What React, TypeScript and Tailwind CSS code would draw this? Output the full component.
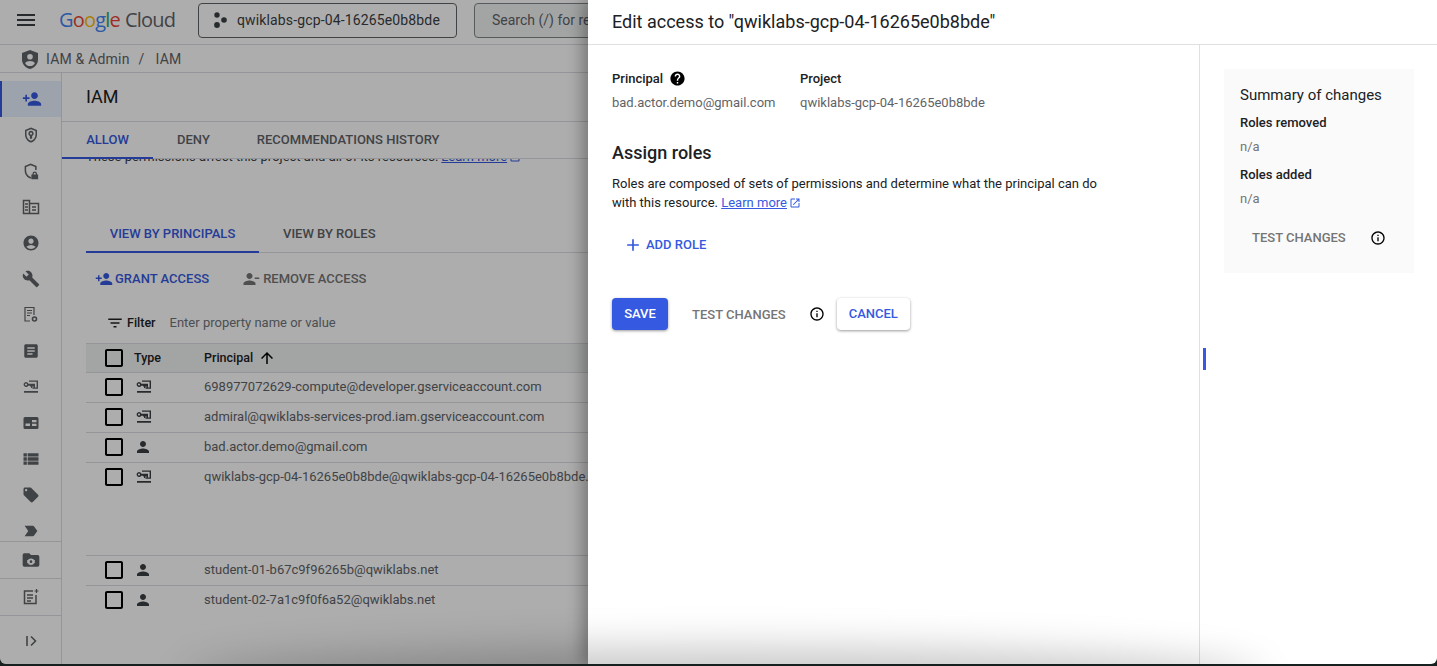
import React from 'react';
import {
  MdAccountCircle,
  MdAdd,
  MdArrowUpward,
  MdArticle,
  MdBuild,
  MdCheckBoxOutlineBlank,
  MdFilterList,
  MdHelp,
  MdInfoOutline,
  MdLabelImportant,
  MdLocalOffer,
  MdMenu,
  MdOpenInNew,
  MdPerson,
  MdPersonAdd,
  MdPersonRemove,
  MdViewList,
} from 'react-icons/md';

// Drawings the icon packages don't carry
const ServiceAccount = () => (
  <svg width={16} height={14} viewBox="0 0 16 14" fill="currentColor">
    <path fillRule="evenodd" d="M3 2a2.500 2.500 0 0 1 2.400 1.800H12V8h-1.400V6.500H9.400V8H8V6.500H7V5.800H5.300A2.500 2.500 0 1 1 3 2zm0 1.400a1.100 1.100 0 1 0 0 2.200 1.100 1.100 0 0 0 0-2.200z" />
    <path d="M6 .5h9v8.300H9.500V7.500h4.100V1.800H6zM1 11h14v1.700H1z" />
  </svg>
);

const KeyholeShield = () => (
  <svg width={18} height={18} viewBox="0 0 24 24" fill="currentColor">
    <path fillRule="evenodd" d="M12 2 4 5.200v6c0 5 3.400 9.600 8 10.800 4.600-1.200 8-5.800 8-10.800v-6zm0 2.200 6 2.400v4.600c0 3.900-2.500 7.500-6 8.600-3.500-1.100-6-4.700-6-8.600V6.600z" />
    <path fillRule="evenodd" d="M12 6.500a3.500 3.500 0 0 1 1.500 6.700V17h-3v-3.800A3.500 3.500 0 0 1 12 6.500zm0 2a1.500 1.500 0 1 0 0 3 1.500 1.500 0 0 0 0-3z" />
  </svg>
);

const LockShield = () => (
  <svg width={18} height={18} viewBox="0 0 24 24" fill="currentColor">
    <path d="M11.500 2 3.500 5.200v6c0 5 3.400 9.600 8 10.800l.8-.2v-2.200l-.8.300c-3.500-1.100-6-4.700-6-8.600V6.600l6-2.400 6 2.400v4h2V5.200z" />
    <path fillRule="evenodd" d="M14 16.500v-1a3 3 0 0 1 6 0v1h1.500V23h-9v-6.500zm1.700 0h2.600v-1a1.300 1.300 0 0 0-2.600 0z" />
  </svg>
);

const AdminShield = () => (
  <svg width={16} height={19} viewBox="0 0 16 19" fill="currentColor">
    <path fillRule="evenodd" d="M8 0 0 3v6.500C0 14 3.400 17.900 8 19c4.600-1.100 8-5 8-9.500V3zm0 4a2.800 2.800 0 1 1 0 5.600A2.800 2.800 0 0 1 8 4zm0 12c-2 0-3.800-1-4.800-2.600C3.400 11.800 6.300 11 8 11s4.600.8 4.800 2.400C11.800 15 10 16 8 16z" />
  </svg>
);

const ProjectDots = () => (
  <svg width={16} height={16} viewBox="0 0 16 16" fill="currentColor">
    <circle cx="5" cy="3" r="2.700" />
    <circle cx="12" cy="8" r="2.800" />
    <circle cx="5" cy="13" r="2.900" />
  </svg>
);

const Buildings = () => (
  <svg width={18} height={18} viewBox="0 0 18 18" fill="none" stroke="currentColor" strokeWidth="1.500">
    <path d="M1.500 2.500h6v13h-6zM7.500 5.500h9v10h-9z" />
    <path d="M3 6h3M3 9h3M3 12h3M10 9h4M10 12h4" />
  </svg>
);

const AuditDoc = () => (
  <svg width={18} height={18} viewBox="0 0 18 18" fill="none" stroke="currentColor" strokeWidth="1.200">
    <path d="M8 15H3V1.500h9V9" />
    <path d="M5 4.500h5M5 7h5M5 9.500h3" />
    <circle cx="12.500" cy="13" r="2" strokeWidth="1.600" />
  </svg>
);

const IdCard = () => (
  <svg width={18} height={18} viewBox="0 0 18 18" fill="currentColor">
    <path fillRule="evenodd" d="M3 3h12a1.500 1.500 0 0 1 1.500 1.500v9A1.500 1.500 0 0 1 15 15H3a1.500 1.500 0 0 1-1.500-1.500v-9A1.500 1.500 0 0 1 3 3zm7 3v2.200h4.500V6zm0 3.800V12h4.500V9.800zM3.500 9.500V12H8V9.500z" />
  </svg>
);

const FolderGear = () => (
  <svg width={20} height={20} viewBox="0 0 24 24" fill="currentColor">
    <path fillRule="evenodd" d="M10 4H4a2 2 0 0 0-2 2v12a2 2 0 0 0 2 2h16a2 2 0 0 0 2-2V8a2 2 0 0 0-2-2h-8zm2 5.500 1 1.200 1.500-.3.700 1.400 1.500.5-.2 1.700.2 1.700-1.500.5-.7 1.400-1.500-.3-1 1.200-1-1.200-1.500.3-.7-1.400-1.500-.5.200-1.700-.2-1.700 1.500-.5.700-1.400 1.500.3zm0 2.900a1.600 1.600 0 1 0 0 3.200 1.600 1.600 0 0 0 0-3.200z" />
  </svg>
);

const NoteSpark = () => (
  <svg width={18} height={18} viewBox="0 0 18 18" fill="none" stroke="currentColor" strokeWidth="1.500">
    <path d="M11 3H2.500v12.500H14V7" />
    <path d="M5 7h6M5 10h6M5 13h4" />
    <path d="M14.500 1v4M12.500 3h4" strokeWidth="1.200" />
  </svg>
);

const ExpandNav = () => (
  <svg width={14} height={14} viewBox="0 0 14 14" fill="none" stroke="currentColor" strokeWidth="1.600">
    <path d="M3 2v10M7 2.500 11.500 7 7 11.500" />
  </svg>
);

const navIcons = [
  <MdPersonAdd size={20} />,
  <KeyholeShield />,
  <LockShield />,
  <Buildings />,
  <MdAccountCircle size={18} />,
  <MdBuild size={18} />,
  <AuditDoc />,
  <MdArticle size={18} />,
  <ServiceAccount />,
  <IdCard />,
  <MdViewList size={20} />,
  <MdLocalOffer size={18} />,
  <MdLabelImportant size={18} />,
];

const members = [
  { name: '698977072629-compute@developer.gserviceaccount.com', service: true, h: 'h-[30px]' },
  { name: 'admiral@qwiklabs-services-prod.iam.gserviceaccount.com', service: true, h: 'h-[30px]' },
  { name: 'bad.actor.demo@gmail.com', service: false, h: 'h-[30px]' },
  { name: 'qwiklabs-gcp-04-16265e0b8bde@qwiklabs-gcp-04-16265e0b8bde.iam.gserviceaccount.com', service: true, h: 'h-[93px]' },
  { name: 'student-01-b67c9f96265b@qwiklabs.net', service: false, h: 'h-[30px]' },
  { name: 'student-02-7a1c9f0f6a52@qwiklabs.net', service: false, h: 'h-[30px]' },
];

const Console = () => (
  <div className="relative w-[588px] shrink-0 overflow-hidden bg-white">
    {/* Top bar */}
    <div className="flex h-[45px] w-[800px] items-center border-b border-[#dadce0] pb-[4px]">
      <div className="ml-[14px] text-[#3c4043]"><MdMenu size={24} /></div>
      <div className="ml-[21px] w-[139px] whitespace-nowrap font-['Open_Sans',sans-serif] text-[20px] tracking-[-0.8px]">
        <span className="text-[#4285f4]">G</span>
        <span className="text-[#ea4335]">o</span>
        <span className="text-[#fbbc05]">o</span>
        <span className="text-[#4285f4]">g</span>
        <span className="text-[#34a853]">l</span>
        <span className="text-[#ea4335]">e</span>
        <span className="ml-[5px] text-[#5f6368]">Cloud</span>
      </div>
      <div className="flex h-[35px] w-[259px] items-center rounded border border-[#5f6368] pl-[13px] text-[#3c4043]">
        <ProjectDots />
        <span className="ml-[9px] whitespace-nowrap text-[14px] tracking-[0.14px]">qwiklabs-gcp-04-16265e0b8bde</span>
      </div>
      <div className="ml-[17px] flex h-[35px] w-[300px] items-center whitespace-nowrap rounded border border-[#80868b] bg-[#f1f3f4] pl-[17px] text-[14px] text-[#5f6368]">
        Search (/) for resources, docs, products, and more
      </div>
    </div>

    {/* Breadcrumb */}
    <div className="flex h-[28px] items-center border-b border-[#dadce0] pl-[22px] pt-[1px] text-[14px] tracking-[0.2px] text-[#5f6368]">
      <AdminShield />
      <span className="ml-[8px]">IAM &amp; Admin</span>
      <span className="ml-[9px]">/</span>
      <span className="ml-[11px]">IAM</span>
    </div>

    <div className="flex h-[591px]">
      {/* Side nav */}
      <div className="flex w-[62px] shrink-0 flex-col border-r border-[#dadce0] text-[#5f6368]">
        <div className="h-[468px] overflow-hidden pt-[8px]">
          {navIcons.map((icon, i) => (
            <div
              key={i}
              className={`flex h-[36px] items-center justify-center ${i === 0 ? 'border-l-2 border-[#3559e0] bg-[#e8f0fe] text-[#3559e0]' : ''}`}
            >
              {icon}
            </div>
          ))}
        </div>
        <div className="flex h-[37px] items-center justify-center border-t border-[#dadce0]"><FolderGear /></div>
        <div className="flex h-[37px] items-center justify-center border-t border-[#dadce0]"><NoteSpark /></div>
        <div className="flex flex-1 items-center justify-center border-t border-[#dadce0] pt-[2px]"><ExpandNav /></div>
      </div>

      {/* Main */}
      <div className="min-w-0 flex-1">
        <div className="flex h-[49px] items-center border-b border-[#dadce0] pb-[2px] pl-[24px] text-[18px] text-[#202124]">IAM</div>
        <div className="relative z-10 flex h-[37px] items-center border-b border-[#dadce0] bg-white text-[13px] font-medium text-[#5f6368]">
          <div className="flex h-[37px] w-[91px] items-center justify-center border-b-2 border-[#3559e0] pt-[2px] text-[#3559e0]">ALLOW</div>
          <span className="ml-[24px]">DENY</span>
          <span className="ml-[47px] whitespace-nowrap">RECOMMENDATIONS HISTORY</span>
        </div>

        <div className="h-[505px] overflow-hidden">
          <div className="-mt-[11px] flex h-[18px] items-center whitespace-nowrap pl-[24px] text-[13px] text-[#3c4043]">
            These permissions affect this project and all of its resources.
            <span className="ml-[3px] text-[#3559e0] underline">Learn more</span>
            <MdOpenInNew size={12} className="ml-[2px] text-[#3559e0]" />
          </div>

          {/* Principals / roles tabs */}
          <div className="ml-[24px] mt-[50px] flex h-[37px] items-center border-b border-[#dadce0] text-[13px] font-medium text-[#5f6368]">
            <div className="flex h-[37px] w-[173px] items-center justify-center border-b-2 border-[#3559e0] pt-[2px] text-[#3559e0]">VIEW BY PRINCIPALS</div>
            <span className="ml-[24px]">VIEW BY ROLES</span>
          </div>

          <div className="ml-[33px] mt-[11px] flex h-[30px] items-center text-[13px] font-medium">
            <div className="flex items-center text-[#3559e0]">
              <MdPersonAdd size={18} />
              <span className="ml-[2px]">GRANT ACCESS</span>
            </div>
            <div className="ml-[33px] flex items-center text-[#757575]">
              <MdPersonRemove size={18} />
              <span className="ml-[3px]">REMOVE ACCESS</span>
            </div>
          </div>

          <div className="ml-[44px] mt-[14px] flex h-[30px] items-center text-[12.500px]">
            <MdFilterList size={18} className="text-[#202124]" />
            <span className="ml-[3px] font-medium text-[#202124]">Filter</span>
            <span className="ml-[14px] text-[13px] text-[#70757a]">Enter property name or value</span>
          </div>

          {/* Table */}
          <div className="ml-[24px] mt-[5px] whitespace-nowrap text-[13px]">
            <div className="flex h-[30px] items-center border-y border-[#dadce0] bg-[#f1f3f4] text-[12.500px] font-medium text-[#202124]">
              <MdCheckBoxOutlineBlank size={24} className="ml-[16px] text-black" />
              <span className="ml-[8px] w-[70px]">Type</span>
              <span>Principal</span>
              <MdArrowUpward size={18} className="ml-[5px] text-black" />
            </div>
            {members.map((m) => (
              <div key={m.name} className={`flex ${m.h} items-start border-b border-[#dadce0] pt-[2px] last:border-b-0`}>
                <MdCheckBoxOutlineBlank size={24} className="ml-[16px] shrink-0 text-black" />
                <div className="ml-[8px] mt-[3px] flex h-[18px] w-[70px] shrink-0 items-center text-[#3c4043]">
                  {m.service ? <div className="ml-[2px]"><ServiceAccount /></div> : <MdPerson size={18} />}
                </div>
                <span className="mt-[2px] text-[#5f6368]">{m.name}</span>
              </div>
            ))}
          </div>
        </div>
      </div>
    </div>

    {/* Scrim behind the drawer */}
    <div className="absolute inset-0 z-20 bg-black/32" />
  </div>
);

const InfoIcon = () => <MdInfoOutline size={16} className="text-black" />;

const Drawer = () => (
  <div className="relative z-30 flex min-w-0 flex-1 flex-col bg-white shadow-[-6px_0_14px_rgba(0,0,0,0.3)]">
    <div className="flex h-[45px] shrink-0 items-center border-b border-[#e0e0e0] pb-[2px] pl-[24px] text-[18px] text-[#202124]">
      Edit access to "qwiklabs-gcp-04-16265e0b8bde"
    </div>
    <div className="flex min-h-0 flex-1">
      <div className="w-[612px] shrink-0 border-r border-[#e0e0e0] pl-[24px] pt-[24px] text-[13px]">
        <div className="flex">
          <div className="w-[188px]">
            <div className="flex h-[18px] items-center pt-[1px] font-medium text-[#202124]">
              Principal
              <MdHelp size={17} className="ml-[6px] text-black" />
            </div>
            <div className="mt-[6px] text-[#5f6368]">bad.actor.demo@gmail.com</div>
          </div>
          <div>
            <div className="flex h-[18px] items-center pt-[1px] font-medium text-[#202124]">Project</div>
            <div className="mt-[6px] text-[#5f6368]">qwiklabs-gcp-04-16265e0b8bde</div>
          </div>
        </div>

        <div className="mt-[28px] text-[18px] font-medium leading-[24px] text-[#202124]">Assign roles</div>
        <p className="mt-[9px] w-[490px] text-[13px] leading-[19px] text-[#202124]">
          Roles are composed of sets of permissions and determine what the principal can do with this resource.{' '}
          <span className="text-[#3559e0] underline">Learn more</span>
          <MdOpenInNew size={12} className="ml-[2px] inline align-[-2px] text-[#3559e0]" />
        </p>

        <div className="ml-[11px] mt-[21px] flex h-[24px] items-center font-medium text-[#3559e0]">
          <MdAdd size={20} />
          <span className="ml-[3px]">ADD ROLE</span>
        </div>

        <div className="mt-[41px] flex h-[32px] items-center font-medium">
          <div className="flex h-[32px] w-[56px] items-center justify-center rounded bg-[#3559e0] text-white shadow-[0_1px_3px_rgba(0,0,0,0.4)]">SAVE</div>
          <span className="ml-[24px] mt-[2px] text-[#757575]">TEST CHANGES</span>
          <div className="ml-[23px]"><InfoIcon /></div>
          <div className="ml-[12px] flex h-[32px] w-[73px] items-center justify-center rounded bg-white text-[#3559e0] shadow-[0_1px_3px_rgba(0,0,0,0.4)]">CANCEL</div>
        </div>
      </div>

      {/* Resize grip */}
      <div className="flex w-[24px] shrink-0 pl-[3px] pt-[303px]">
        <div className="h-[22px] w-[3px] bg-[#3559e0]" />
      </div>

      <div className="pt-[24px]">
        <div className="h-[204px] w-[190px] bg-[#fafafa] px-[16px] pt-[16px] text-[13px]">
          <div className="text-[15px] leading-[20px] text-[#202124]">Summary of changes</div>
          <div className="mt-[8px] font-medium text-[#202124]">Roles removed</div>
          <div className="mt-[4px] text-[#757575]">n/a</div>
          <div className="mt-[9px] font-medium text-[#202124]">Roles added</div>
          <div className="mt-[4px] text-[#757575]">n/a</div>
          <div className="ml-[12px] mt-[20px] flex items-center font-medium text-[#757575]">
            TEST CHANGES
            <div className="ml-[24px]"><InfoIcon /></div>
          </div>
        </div>
      </div>
    </div>
  </div>
);

export default function App() {
  return (
    <div className="h-[666px] w-[1437px] overflow-hidden bg-[#15201f] font-['Roboto',sans-serif]">
      <div className="relative flex h-[664px] overflow-hidden rounded-b-[6px]">
        <Console />
        <Drawer />
        {/* Soft shadow along the window's bottom edge */}
        <div className="pointer-events-none absolute -bottom-[30px] left-[200px] right-[190px] z-40 h-[30px] rounded-[50%] shadow-[0_0_40px_16px_rgba(0,0,0,0.22)]" />
      </div>
    </div>
  );
}
